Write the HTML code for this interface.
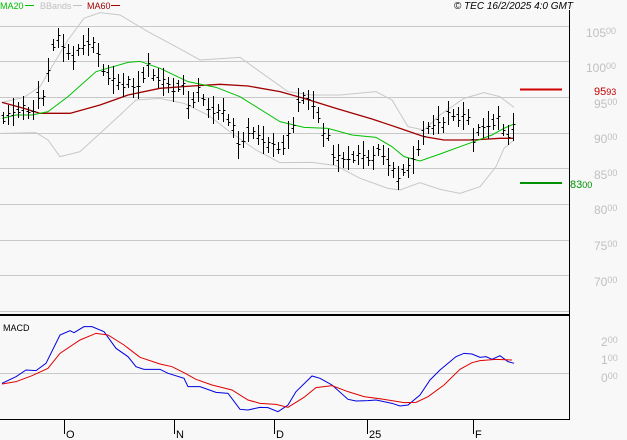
<!DOCTYPE html>
<html><head><meta charset="utf-8"><style>
html,body{margin:0;padding:0;background:#f8f8f8;}
svg{display:block}
text{font-family:"Liberation Sans",sans-serif;}
</style></head><body>
<svg id="chart" width="627" height="440" viewBox="0 0 627 440" xmlns="http://www.w3.org/2000/svg">
<rect width="627" height="440" fill="#f8f8f8"/>
<g stroke="#c8c8c8" stroke-width="1">
<line x1="0" x2="569" y1="26.5" y2="26.5"/><line x1="0" x2="569" y1="61.5" y2="61.5"/>
<line x1="0" x2="569" y1="97.5" y2="97.5"/><line x1="0" x2="569" y1="133.5" y2="133.5"/>
<line x1="0" x2="569" y1="168.5" y2="168.5"/><line x1="0" x2="569" y1="204.5" y2="204.5"/>
<line x1="0" x2="569" y1="240.5" y2="240.5"/><line x1="0" x2="569" y1="275.5" y2="275.5"/>
<line x1="0" x2="569" y1="311.5" y2="311.5"/><line x1="0" x2="569" y1="373.5" y2="373.5"/>
</g>
<line x1="0" x2="569" y1="315" y2="315" stroke="#000" stroke-width="2"/>
<line x1="569.5" x2="569.5" y1="10" y2="420" stroke="#000"/>
<line x1="0" x2="569" y1="419.5" y2="419.5" stroke="#000"/>
<g stroke="#000"><line x1="64.5" x2="64.5" y1="419" y2="434"/><line x1="174.5" x2="174.5" y1="419" y2="434"/><line x1="274.5" x2="274.5" y1="419" y2="434"/><line x1="367.5" x2="367.5" y1="419" y2="434"/><line x1="473.5" x2="473.5" y1="419" y2="434"/></g>
<g font-size="11" fill="#000"><text x="66" y="438">O</text><text x="176" y="438">N</text><text x="276" y="438">D</text><text x="369" y="438">25</text><text x="475" y="438">F</text></g>
<text x="3" y="331" font-size="9" fill="#000">MACD</text>
<g font-size="9"><text x="0" y="9" fill="#00c000">MA20</text><line x1="25" x2="34" y1="5.5" y2="5.5" stroke="#00c000"/>
<text x="40" y="9" fill="#c0c0c0">BBands</text><line x1="73" x2="82" y1="5.5" y2="5.5" stroke="#c0c0c0"/>
<text x="87" y="9" fill="#a00000">MA60</text><line x1="111" x2="120" y1="5.5" y2="5.5" stroke="#a00000"/></g>
<text x="573" y="9" font-size="10" font-style="italic" text-anchor="end" fill="#000">© TEC 16/2/2025 4:0 GMT</text>
<g font-size="12" fill="#c0c0c0">
<text x="586" y="37">105<tspan font-size="9" dy="-3">00</tspan></text>
<text x="586" y="72">100<tspan font-size="9" dy="-3">00</tspan></text>
<text x="594" y="108">95<tspan font-size="9" dy="-3">00</tspan></text>
<text x="594" y="143">90<tspan font-size="9" dy="-3">00</tspan></text>
<text x="594" y="179">85<tspan font-size="9" dy="-3">00</tspan></text>
<text x="594" y="214">80<tspan font-size="9" dy="-3">00</tspan></text>
<text x="594" y="250">75<tspan font-size="9" dy="-3">00</tspan></text>
<text x="594" y="286">70<tspan font-size="9" dy="-3">00</tspan></text>
<text x="601" y="346">2<tspan font-size="9" dy="-3">00</tspan></text>
<text x="601" y="364">1<tspan font-size="9" dy="-3">00</tspan></text>
<text x="601" y="382">0<tspan font-size="9" dy="-3">00</tspan></text>
</g>
<line x1="520" x2="562" y1="89.5" y2="89.5" stroke="#d00000" stroke-width="2"/>
<text x="594" y="95" font-size="11" fill="#c00000">95<tspan font-size="9">93</tspan></text>
<line x1="520" x2="562" y1="183" y2="183" stroke="#009000" stroke-width="2"/>
<text x="570" y="188" font-size="11" fill="#009000">83<tspan font-size="9">00</tspan></text>
<g transform="scale(0.4 0.33333)" fill="none">
<polyline vector-effect="non-scaling-stroke" stroke="#c8c8c8" stroke-width="1" points="5,307 60,292 100,260 130,200 170,120 210,55 250,38 300,45 370,95 440,140 500,180 600,172 650,215 720,275 780,285 850,285 940,275 980,300 1020,380 1060,390 1100,345 1160,295 1210,278 1250,290 1285,322"/>
<polyline vector-effect="non-scaling-stroke" stroke="#c8c8c8" stroke-width="1" points="5,400 90,398 120,420 150,470 200,455 250,400 300,345 340,300 400,295 460,310 520,345 580,400 640,450 700,488 780,487 840,497 900,535 970,565 1000,570 1050,548 1100,568 1150,580 1200,560 1240,500 1260,445 1285,420"/>
<polyline vector-effect="non-scaling-stroke" stroke="#a00000" stroke-width="1.3" points="5,307 60,325 100,340 175,340 250,315 320,285 400,265 480,258 550,253 620,258 700,275 760,295 840,325 930,357 1000,385 1060,410 1110,420 1180,420 1250,415 1285,415"/>
<polyline vector-effect="non-scaling-stroke" stroke="#00c000" stroke-width="1" points="5,355 40,345 80,345 120,335 170,290 240,215 320,187 350,184 400,205 470,245 540,262 600,290 700,365 760,382 820,385 880,405 940,412 980,440 1010,470 1050,483 1100,462 1180,427 1230,405 1260,385 1285,372"/>
<polyline vector-effect="non-scaling-stroke" stroke="#0000e0" stroke-width="1" transform="translate(0 660)" points="5,490 40,470 65,450 90,452 115,430 150,345 175,332 185,338 210,320 230,320 260,335 290,385 320,410 340,440 360,448 400,448 420,460 460,475 470,500 500,500 540,517 570,520 600,568 620,570 650,562 670,563 695,575 720,555 740,515 780,468 800,475 830,495 870,538 890,543 920,542 940,540 980,550 1000,558 1020,555 1050,525 1075,480 1100,450 1140,410 1160,400 1180,402 1200,412 1215,410 1230,418 1250,407 1270,425 1285,430"/>
<polyline vector-effect="non-scaling-stroke" stroke="#e00000" stroke-width="1" transform="translate(0 660)" points="5,492 40,485 80,467 120,445 150,400 200,360 240,340 270,345 310,375 350,412 400,432 430,440 460,458 490,478 530,495 580,510 620,540 650,550 690,553 720,562 760,532 790,503 830,497 870,515 910,530 960,538 1010,548 1040,547 1070,530 1110,495 1150,448 1180,428 1200,422 1240,418 1280,420"/>
</g>
<g id="bars" stroke="#000" stroke-width="1"></g>
</svg>
<script>
(function(){
var m=[118,115,112,110,108,113,110,95,98,70,45,38,48,52,58,50,45,42,45,55,70,75,80,82,85,82,88,85,75,65,75,78,82,85,90,86,85,105,100,90,100,108,110,112,110,120,128,145,140,130,133,135,140,145,145,148,145,135,125,100,98,100,105,115,135,135,155,158,160,158,157,155,155,158,158,150,155,162,170,178,170,168,160,148,133,128,125,120,125,113,115,117,116,117,140,130,128,125,122,118,130,135,127];
var g=document.getElementById('bars'),NS='http://www.w3.org/2000/svg';
function L(a,b,c,d){var e=document.createElementNS(NS,'line');e.setAttribute('x1',a);e.setAttribute('x2',b);e.setAttribute('y1',c);e.setAttribute('y2',d);g.appendChild(e);}
for(var i=0;i<m.length;i++){var x=3+i*5+0.5,h=6+((i*7)%5)*2,y=m[i];
var o=y+((i*3)%7-3)+0.5,c=y-((i*5)%7-3)+0.5;
L(x,x,y-h,y+h);L(x-2,x,o,o);L(x,x+2,c,c);}
})();
</script>
</body></html>
